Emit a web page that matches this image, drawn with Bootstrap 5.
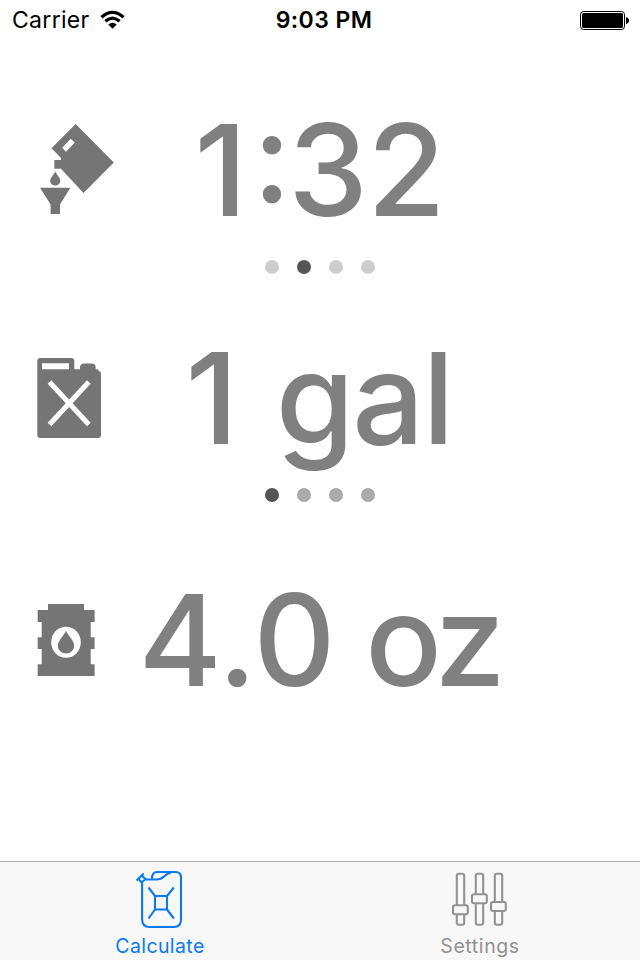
<!DOCTYPE html>
<html lang="en">
<head>
<meta charset="utf-8">
<meta name="viewport" content="width=device-width, initial-scale=1">
<title>Fuel Mix</title>
<link href="https://cdn.jsdelivr.net/npm/bootstrap@5.3.0/dist/css/bootstrap.min.css" rel="stylesheet">
<style>
  body { font-family: Inter, "Liberation Sans", sans-serif; background: #fff; color: #000; }
  .screen { width: 640px; height: 960px; }
  .status-bar { height: 40px; display: grid; grid-template-columns: 1fr auto 1fr; font-size: 23px; line-height: 39px; padding: 0 11px 0 12px; }
  .carrier { letter-spacing: .3px; padding-top: 1px; }
  .clock { letter-spacing: .4px; font-weight: 600; padding: 1px 0 0 7px; }
  .reading { display: grid; grid-template-columns: 130px 1fr 130px; height: 128px; }
  .mix-reading { margin-top: 66px; }
  .gas-reading { margin-top: 60px; }
  .oil-reading { margin-top: 74px; }
  .value { font-size: 127px; line-height: 128px; font-weight: 500; color: #808080; letter-spacing: -2px; font-feature-settings: "case"; padding-right: 2px; }
  .oil-reading .value { padding-left: 4px; }
  .kern-wide { letter-spacing: 5.5px; }
  .kern-loose { letter-spacing: -.5px; }
  .kern-snug { letter-spacing: -3px; }
  .kern-close { letter-spacing: -4px; }
  .kern-tight { letter-spacing: -7.5px; }
  .glyph { fill: #757575; }
  .dots { height: 14px; margin-top: 26px; gap: 18px; }
  .dot { width: 14px; height: 14px; background: #cecece; }
  .dots-dark .dot { background: #aaa; }
  .dots .dot.on { background: #555; }
  .tabs { height: 99px; background: #f8f8f8; border-top: 1px solid #b2b2b2; }
  .tab { color: #929292; font-size: 19.5px; line-height: 24px; letter-spacing: .6px; }
  .tab.current { color: #0b79f0; letter-spacing: .4px; }
  .tab svg { fill: none; stroke: currentColor; stroke-width: 2.1; stroke-linejoin: round; }
</style>
</head>
<body>
<div class="screen d-flex flex-column overflow-hidden">
  <header class="status-bar">
    <div class="d-flex align-items-center">
      <span class="carrier">Carrier</span>
      <svg class="ms-2" width="28" height="24" viewBox="98 8 28 24" fill="none" stroke="#000" stroke-width="3.2">
        <path d="M101.5 17.2Q112.5 7.6 123.5 17.2M105.4 21.3Q112.5 15.1 119.6 21.3"/>
        <path d="M108.3 24.4Q112.5 21 116.7 24.4L112.5 28.8Z" fill="#000" stroke="none"/>
      </svg>
    </div>
    <div class="clock">9:03 PM</div>
    <div class="d-flex align-items-center justify-content-end">
      <svg width="50" height="20" viewBox="579 10 50 20">
        <rect x="580.5" y="11.5" width="44" height="18" rx="3" fill="#fff" stroke="#000"/>
        <rect x="582" y="13" width="41" height="15" rx="1.5"/>
        <path d="M626 17q3 1 3 3.5t-3 3.5z"/>
      </svg>
    </div>
  </header>

  <main class="flex-grow-1">
    <section class="reading mix-reading">
      <svg class="glyph" width="130" height="128" viewBox="0 106 130 128">
        <path fill-rule="evenodd" d="M75.7 124L113.8 162.5L83.5 193L61 168.7H54.3V160H61V158L51.5 148.3ZM70.7 138.8L62.2 147.8L66 151.8L74.8 142.4Z"/>
        <path d="M55.2 171.3C56.5 175 60.3 177.3 60.3 181A5.05 4.6 0 0 1 50.2 181C50.2 177.3 54 175 55.2 171.3ZM40 187.7H70.4L60 204.5V214H50.6V204.5Z"/>
      </svg>
      <div class="value text-center text-nowrap"><span class="kern-wide">1</span><span class="kern-snug">:</span><span class="kern-loose">3</span>2</div>
    </section>
    <div class="dots d-flex justify-content-center">
      <span class="dot rounded-circle"></span><span class="dot rounded-circle on"></span><span class="dot rounded-circle"></span><span class="dot rounded-circle"></span>
    </div>

    <section class="reading gas-reading">
      <svg class="glyph" width="130" height="128" viewBox="0 334 130 128">
        <path fill-rule="evenodd" d="M40.3 358H71.3Q74.3 358 74.3 361V369.3H80V367Q80.5 363.6 84 363.6H92Q95.2 363.6 95.7 367V369.3H97Q98.5 369.5 99 371Q101 371.5 101 374V435Q101 438 98 438H40.3Q37.3 438 37.3 435V361Q37.3 358 40.3 358ZM42 363.3V369.3H69V363.3Z"/>
        <path d="M49.5 382L88.8 424.5M88.8 382L49.5 424.5" stroke="#fff" stroke-width="5"/>
      </svg>
      <div class="value text-center text-nowrap">1<span class="kern-wide"> </span>gal</div>
    </section>
    <div class="dots dots-dark d-flex justify-content-center">
      <span class="dot rounded-circle on"></span><span class="dot rounded-circle"></span><span class="dot rounded-circle"></span><span class="dot rounded-circle"></span>
    </div>

    <section class="reading oil-reading">
      <svg class="glyph" width="130" height="128" viewBox="0 576 130 128">
        <path d="M48 604H84V610H94.6V622H90.7V637.3H94.6V649H90.7V664.3H94.6V676H37.7V664.3H41.7V649H37.7V637.3H41.7V622H37.7V610H48Z"/>
        <ellipse cx="66" cy="642.2" rx="14.8" ry="15.5" fill="#fff"/>
        <path d="M66 630.6C68.2 636.5 74.2 640.5 74.2 646A8.2 7.5 0 0 1 57.8 646C57.8 640.5 63.8 636.5 66 630.6Z"/>
      </svg>
      <div class="value text-center text-nowrap"><span class="kern-close">4</span><span class="kern-snug">.</span>0 <span class="kern-tight">o</span>z</div>
    </section>
  </main>

  <nav class="tabs d-flex">
    <a class="tab current col-6 d-flex flex-column align-items-center text-decoration-none" href="#">
      <svg width="60" height="72" viewBox="130 862 60 72">
        <path d="M142.1 882V919.5Q142.1 927 149.5 927H174Q181 927 181 919.5V877.5Q181 872 175.5 872H157Q152 872 152 879M142.1 882L145 879.5H156Q161 879.5 164 876.5Q167.5 873 171 872.5"/>
        <path d="M136.5 880.5L143.7 873.5M138.3 878.8L142.1 883M141.7 875.5L146 879.5"/>
        <path d="M155 896H167V909.5H155ZM148.5 887.5L155 896M173.8 887.5L167 896M148.5 918.5L155 909.5M173.8 918.5L167 909.5"/>
      </svg>
      <span>Calculate</span>
    </a>
    <a class="tab col-6 d-flex flex-column align-items-center text-decoration-none" href="#">
      <svg width="60" height="72" viewBox="450.2 862 60 72">
        <rect x="457" y="873.7" width="7.4" height="51" rx="2"/>
        <rect x="476" y="873.7" width="7.4" height="51" rx="2"/>
        <rect x="495" y="873.7" width="7.4" height="51" rx="2"/>
        <g fill="#f8f8f8">
          <rect x="453.2" y="905.3" width="14.8" height="9" rx="2"/>
          <rect x="472.2" y="894.3" width="14.8" height="9" rx="2"/>
          <rect x="491.2" y="902" width="14.8" height="9" rx="2"/>
        </g>
      </svg>
      <span>Settings</span>
    </a>
  </nav>
</div>
<script src="https://cdn.jsdelivr.net/npm/bootstrap@5.3.0/dist/js/bootstrap.bundle.min.js"></script>
</body>
</html>
